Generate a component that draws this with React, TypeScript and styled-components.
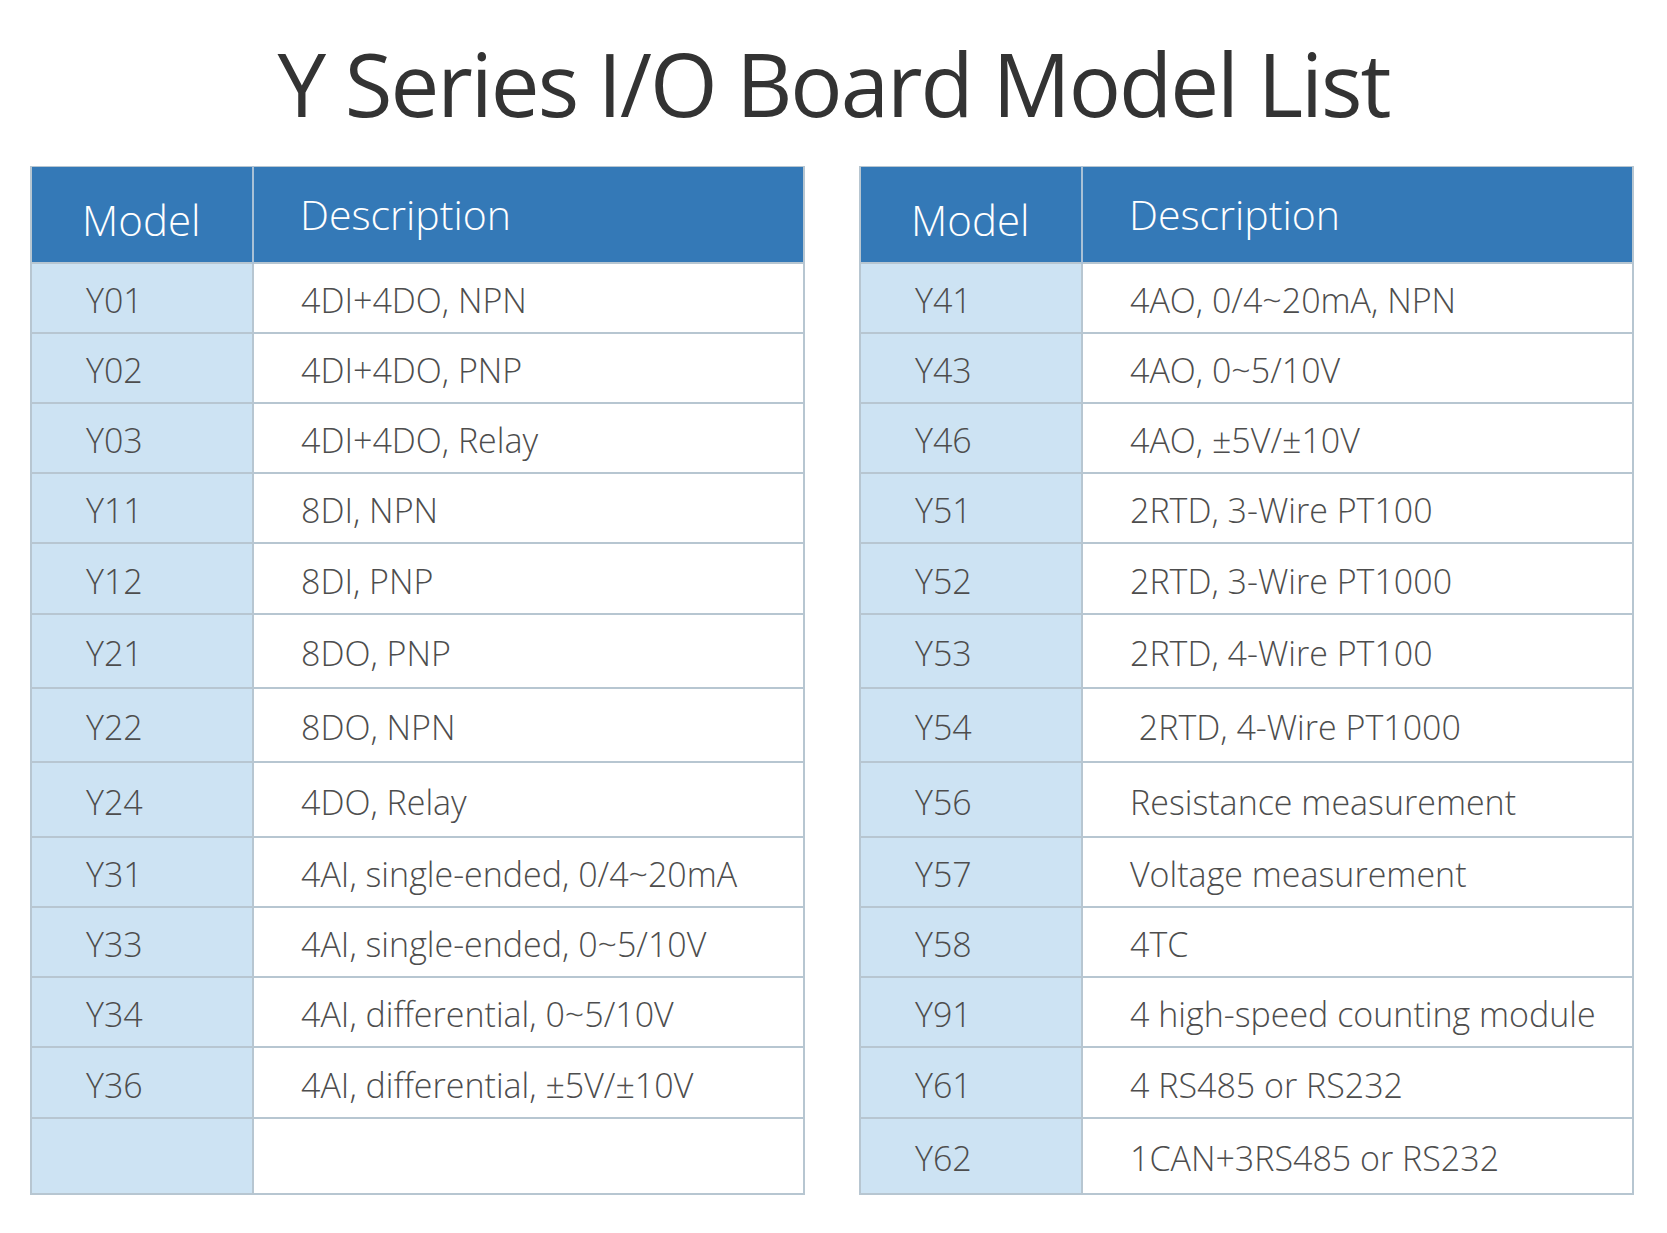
import styled, { createGlobalStyle } from "styled-components";

const GlobalStyle = createGlobalStyle`
    html, body {
        margin: 0;
        padding: 0;
        background: #ffffff;
    }

    body {
        font-family: "Open Sans", "Noto Sans", sans-serif;
    }
`

const Page = styled.div`
    width: 1667px;
    min-height: 1233px;
    background: #ffffff;
`

const Title = styled.h1`
    margin: 0;
    padding-top: 22px;
    height: 166px;
    box-sizing: border-box;
    line-height: 122px;
    text-align: center;
    font-size: 87px;
    font-weight: 400;
    letter-spacing: -2px;
    color: #333333;
`

const Tables = styled.div`
    display: flex;
    gap: 54px;
    padding-left: 30px;
`

const Table = styled.table`
    width: 775px;
    border-collapse: collapse;
    table-layout: fixed;
    border: 2px solid #b7c6d1;
    border-top: 1px solid #b7c6d1;
`

const Col = styled.col<{ $width?: number }>`
    width: ${(p) => (p.$width ? `${p.$width}px` : "auto")};
`

const HeadCell = styled.th<{ $model?: boolean }>`
    height: 96px;
    box-sizing: border-box;
    padding: ${(p) => (p.$model ? "10px 0 0 50px" : "0 0 0 46px")};
    background: #3479b7;
    border-left: 2px solid #a9c1d6;
    color: #ffffff;
    font-size: ${(p) => (p.$model ? "42px" : "41px")};
    font-weight: 300;
    text-align: left;
    vertical-align: middle;

    &:first-child {
        border-left: none;
    }
`

const Row = styled.tr<{ $height: number }>`
    height: ${(p) => p.$height}px;
    border-top: 2px solid #b7c6d1;
`

const ModelCell = styled.td`
    box-sizing: border-box;
    padding: 5px 0 0 54px;
    background: #cde3f3;
    color: #4d4d4d;
    font-size: 34px;
    font-weight: 300;
    vertical-align: middle;
`

const DescCell = styled.td`
    box-sizing: border-box;
    padding: 5px 0 0 47px;
    background: #ffffff;
    border-left: 2px solid #b7c6d1;
    color: #4d4d4d;
    font-size: 34px;
    font-weight: 300;
    white-space: pre;
    vertical-align: middle;
`

const heights = [70, 70, 70, 70, 71, 74, 74, 75, 70, 70, 70, 71, 76]

const leftRows: [string, string][] = [
    ["Y01", "4DI+4DO, NPN"],
    ["Y02", "4DI+4DO, PNP"],
    ["Y03", "4DI+4DO, Relay"],
    ["Y11", "8DI, NPN"],
    ["Y12", "8DI, PNP"],
    ["Y21", "8DO, PNP"],
    ["Y22", "8DO, NPN"],
    ["Y24", "4DO, Relay"],
    ["Y31", "4AI, single-ended, 0/4~20mA"],
    ["Y33", "4AI, single-ended, 0~5/10V"],
    ["Y34", "4AI, differential, 0~5/10V"],
    ["Y36", "4AI, differential, ±5V/±10V"],
    ["", ""],
]

const rightRows: [string, string][] = [
    ["Y41", "4AO, 0/4~20mA, NPN"],
    ["Y43", "4AO, 0~5/10V"],
    ["Y46", "4AO, ±5V/±10V"],
    ["Y51", "2RTD, 3-Wire PT100"],
    ["Y52", "2RTD, 3-Wire PT1000"],
    ["Y53", "2RTD, 4-Wire PT100"],
    ["Y54", " 2RTD, 4-Wire PT1000"],
    ["Y56", "Resistance measurement"],
    ["Y57", "Voltage measurement"],
    ["Y58", "4TC"],
    ["Y91", "4 high-speed counting module"],
    ["Y61", "4 RS485 or RS232"],
    ["Y62", "1CAN+3RS485 or RS232"],
]

function ModelTable({ rows }: { rows: [string, string][] }) {
    return (
        <Table>
            <colgroup>
                <Col $width={222} />
                <Col />
            </colgroup>
            <thead>
                <tr>
                    <HeadCell $model>Model</HeadCell>
                    <HeadCell>Description</HeadCell>
                </tr>
            </thead>
            <tbody>
                {rows.map(([model, desc], i) => (
                    <Row key={i} $height={heights[i]}>
                        <ModelCell>{model}</ModelCell>
                        <DescCell>{desc}</DescCell>
                    </Row>
                ))}
            </tbody>
        </Table>
    )
}

export default function App() {
    return (
        <Page>
            <GlobalStyle />
            <Title>Y Series I/O Board Model List</Title>
            <Tables>
                <ModelTable rows={leftRows} />
                <ModelTable rows={rightRows} />
            </Tables>
        </Page>
    )
}
